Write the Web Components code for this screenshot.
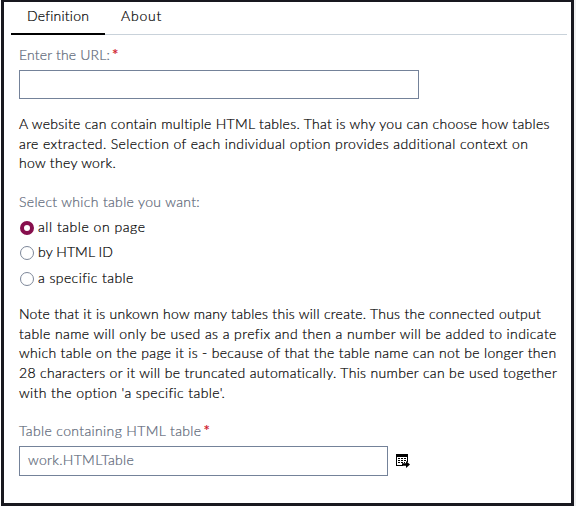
<!DOCTYPE html>
<html lang="en">
<head>
<meta charset="utf-8">
<title>Definition</title>
<style>
  html, body { margin: 0; background: #fff; }
  body { width: 576px; height: 506px; overflow: hidden; font: 300 14px/19.6px Lato, "Open Sans", sans-serif; color: #000; -webkit-text-stroke: 0.2px; }
</style>
</head>
<body>
<settings-panel></settings-panel>
<script>
// A single line of text whose tracking is adjusted to fill a given width.
class TextLine extends HTMLElement {
  connectedCallback() {
    const root = this.attachShadow({ mode: 'open' });
    root.innerHTML = `<style>:host{display:block;white-space:pre}span{display:inline-block}</style><span><slot></slot></span>`;
    const span = root.querySelector('span');
    const want = Number(this.getAttribute('width'));
    const n = this.textContent.length;
    if (want && n) span.style.letterSpacing = ((want - span.getBoundingClientRect().width) / n).toFixed(4) + 'px';
  }
}
customElements.define('text-line', TextLine);

class TabItem extends HTMLElement {
  constructor() {
    super();
    this.attachShadow({ mode: 'open' }).innerHTML = `<style>
      :host{display:block;box-sizing:border-box;height:33px;padding:4px 16px 0}
      :host([selected]){border-bottom:2px solid #000}
    </style><slot></slot>`;
  }
}
customElements.define('tab-item', TabItem);

class TabBar extends HTMLElement {
  constructor() {
    super();
    this.attachShadow({ mode: 'open' }).innerHTML = `<style>
      :host{display:flex;box-sizing:border-box;height:33px;margin:0 4px 0 7px;background:linear-gradient(#c9d2da,#c9d2da) 0 100%/100% 1px no-repeat}
    </style><slot></slot>`;
  }
}
customElements.define('tab-bar', TabBar);

class FieldLabel extends HTMLElement {
  constructor() {
    super();
    this.attachShadow({ mode: 'open' }).innerHTML = `<style>
      :host{display:flex;gap:2px;height:20px;color:#5c6778}
      b{font-weight:400;font-size:15px;color:#d0182b;display:none}
      :host([required]) b{display:block}
    </style><slot></slot><b>*</b>`;
  }
}
customElements.define('field-label', FieldLabel);

class TextField extends HTMLElement {
  constructor() {
    super();
    this.attachShadow({ mode: 'open' }).innerHTML = `<style>
      :host{display:flex;align-items:center;box-sizing:border-box;border:1px solid #748299;padding:0 8px 2px;color:#5c6778;background:#fff}
    </style><slot></slot>`;
  }
}
customElements.define('text-field', TextField);

class RadioOption extends HTMLElement {
  constructor() {
    super();
    this.attachShadow({ mode: 'open' }).innerHTML = `<style>
      :host{display:flex;gap:4px;height:25.4px}
      i{box-sizing:border-box;width:14px;height:14px;margin:4px 0 0 1px;border:1px solid #7d8799;border-radius:50%;background:#fff}
      :host([checked]) i{border:4px solid #870f4d}
    </style><i></i><slot></slot>`;
  }
}
customElements.define('radio-option', RadioOption);

class TableIcon extends HTMLElement {
  constructor() {
    super();
    this.attachShadow({ mode: 'open' }).innerHTML = `<style>:host,svg{display:block}</style>
      <svg width="14" height="14" viewBox="0 0 14 14" shape-rendering="crispEdges">
        <path fill="#000" d="M0 0h12v8h-1V3H1v8h6v1H0z"/>
        <path fill="#000" d="M2 4h2v1H2zM5 4h2v1H5zM8 4h2v1H8zM2 6h2v1H2zM5 6h2v1H5zM8 6h2v1H8zM2 8h2v1H2zM5 8h2v1H5zM8 8h1v1H8z"/>
        <path fill="#000" shape-rendering="auto" d="M6 9.2h4V7l4 3.5-4 3.5v-2.200H6z"/>
      </svg>`;
  }
}
customElements.define('table-icon', TableIcon);

class SettingsPanel extends HTMLElement {
  constructor() {
    super();
    this.attachShadow({ mode: 'open' }).innerHTML = `<style>
      :host{display:block;box-sizing:border-box;width:576px;height:506px;padding-left:1px;background:linear-gradient(#eff0f1,#eff0f1) 100% 0/2px 100% no-repeat}
      .frame{box-sizing:border-box;width:573px;height:506px;border:3px solid #18181f;border-top-width:2px;background:#fff}
      .body{padding:0 0 0 15px}
      .row{display:flex;align-items:center;gap:8px}
      .url{width:400px;height:29px;margin-top:5px}
      .intro{margin-top:15px}
      .choose{margin:19px 0 5px}
      .note{margin-top:11px}
      .note text-line:last-child{padding-top:.6px}
      .table{margin-top:18.4px}
      .name{width:369px;height:30px}
      .row{margin-top:5px}
    </style>
    <div class="frame">
      <tab-bar>
        <tab-item selected><text-line width="62">Definition</text-line></tab-item>
        <tab-item><text-line width="41">About</text-line></tab-item>
      </tab-bar>
      <div class="body">
        <field-label required style="margin-top:10px"><text-line width="91">Enter the URL:</text-line></field-label>
        <text-field class="url"></text-field>
        <div class="intro">
          <text-line width="531">A website can contain multiple HTML tables. That is why you can choose how tables</text-line>
          <text-line width="510">are extracted. Selection of each individual option provides additional context on</text-line>
          <text-line width="97">how they work.</text-line>
        </div>
        <field-label class="choose"><text-line width="181">Select which table you want:</text-line></field-label>
        <radio-option checked><text-line width="107.500">all table on page</text-line></radio-option>
        <radio-option><text-line width="75">by HTML ID</text-line></radio-option>
        <radio-option><text-line width="95.500">a specific table</text-line></radio-option>
        <div class="note">
          <text-line width="522">Note that it is unkown how many tables this will create. Thus the connected output</text-line>
          <text-line width="537.500">table name will only be used as a prefix and then a number will be added to indicate</text-line>
          <text-line width="537.500">which table on the page it is - because of that the table name can not be longer then</text-line>
          <text-line width="538.500">28 characters or it will be truncated automatically. This number can be used together</text-line>
          <text-line width="206">with the option 'a specific table'.</text-line>
        </div>
        <field-label required class="table"><text-line width="182.500">Table containing HTML table</text-line></field-label>
        <div class="row"><text-field class="name"><text-line width="106">work.HTMLTable</text-line></text-field><table-icon></table-icon></div>
      </div>
    </div>`;
  }
}
customElements.define('settings-panel', SettingsPanel);
</script>
</body>
</html>
